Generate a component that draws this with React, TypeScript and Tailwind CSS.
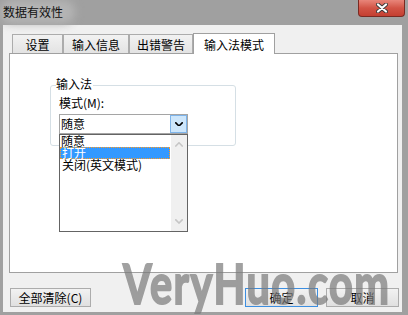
import React from "react";

function Chevron({ up = false, color = "#000", w = 8, sw = 2 }: { up?: boolean; color?: string; w?: number; sw?: number }) {
  return (
    <svg width={w} height={w * 0.6} viewBox="0 0 10 6" className="block">
      <path d={up ? "M1 5 L5 1 L9 5" : "M1 1 L5 5 L9 1"} fill="none" stroke={color} strokeWidth={sw} strokeLinecap="square" />
    </svg>
  );
}

function Tab({ label, active = false, w }: { label: string; active?: boolean; w: string }) {
  if (active) {
    return (
      <div className={`${w} h-[21px] bg-white border border-b-0 border-[#a0a0a0] relative z-10 -mb-px flex items-center justify-center text-[12px] leading-[12px] pt-[1px]`}>
        {label}
      </div>
    );
  }
  return (
    <div className={`${w} h-[19px] bg-gradient-to-b from-[#f2f2f2] to-[#e3e3e3] border border-b-0 border-[#acacac] flex items-center justify-center text-[12px] leading-[12px] pt-[1px]`}>
      {label}
    </div>
  );
}

function Btn({ label, w, focused = false }: { label: string; w: string; focused?: boolean }) {
  return (
    <div
      className={`${w} h-[19px] border ${focused ? "border-[#3c8ee0]" : "border-[#acacac]"} bg-gradient-to-b from-[#f2f2f2] to-[#e0e0e0] flex items-center justify-center text-[12px] leading-[12px]`}
    >
      {label}
    </div>
  );
}

export default function App() {
  return (
    <div className="w-[408px] h-[315px] relative overflow-hidden bg-[#a0a0a0] font-['Noto_Sans_CJK_SC','Noto_Sans',sans-serif] text-black">
      {/* title bar */}
      <div className="h-[25px] relative">
        <div className="absolute left-0 top-0 w-[75px] h-[24px] rounded-full bg-[#b4b4b4] blur-[4px]" />
        <div className="relative pl-[3px] pt-[6px] text-[12px] leading-[12px] text-[#111]">数据有效性</div>
        <div className="absolute left-[358px] top-0 w-[47px] h-[17px] rounded-b-[4px] border border-t-0 border-[#7a2a22] bg-gradient-to-b from-[#e8857a] via-[#d25446] to-[#c43f31] flex items-center justify-center">
          <svg width="12" height="10" viewBox="0 0 12 10">
            <path d="M2 1.5 L10 8.5 M10 1.5 L2 8.5" stroke="#3a3a3a" strokeWidth="4" strokeLinecap="round" />
            <path d="M2 1.5 L10 8.5 M10 1.5 L2 8.5" stroke="#fff" strokeWidth="2.2" strokeLinecap="round" />
          </svg>
        </div>
      </div>

      {/* content */}
      <div className="ml-[3px] w-[399px] h-[287px] bg-[#f0f0f0] flex flex-col px-[6px] pt-[7px]">
        <div className="h-[21px] flex items-end pl-[3px]">
          <Tab label="设置" w="w-[51px]" />
          <Tab label="输入信息" w="w-[66px]" />
          <Tab label="出错警告" w="w-[64px]" />
          <Tab label="输入法模式" w="w-[82px]" active />
        </div>
        <div className="w-[389px] h-[220px] border border-[#a0a0a0] bg-white relative">
          <div className="ml-[40px] mt-[31px] w-[186px] h-[61px] border border-[#d5dfe5] rounded-[3px] relative pl-[8px] pt-[11px]">
            <div className="absolute left-[5px] top-[-8px] bg-white pr-[1px] text-[12px] leading-[12px]">输入法</div>
            <div className="text-[12px] leading-[12px]">模式(M):</div>
            <div className="mt-[5px] w-[129px] h-[20px] border border-[#a5a5a5] bg-white relative flex items-center">
              <span className="pl-[1px] text-[12px] leading-[12px]">随意</span>
              <div className="absolute right-0 top-0 w-[17px] h-[18px] border border-[#7eb4ea] bg-[#cde6fb] flex items-center justify-center">
                <Chevron w={8} sw={2} />
              </div>
              {/* dropdown list */}
              <div className="absolute left-[-1px] top-[19px] w-[129px] h-[98px] border border-[#646464] bg-white z-20 flex">
                <div className="w-[110px] flex flex-col text-[12px] leading-[12px]">
                  <div className="h-[12px] pl-[1px]">随意</div>
                  <div className="h-[12px] pl-[1px] bg-[#3399ff] text-white border border-dotted border-[#ff9a20] leading-[10px]">打开</div>
                  <div className="h-[12px] pl-[2px]">关闭(英文模式)</div>
                </div>
                <div className="ml-auto w-[16px] h-full bg-[#f0f0f0] flex flex-col items-center justify-between pt-[7px] pb-[7px]">
                  <Chevron up color="#c6c6c6" w={8} sw={2} />
                  <Chevron color="#c6c6c6" w={8} sw={2} />
                </div>
              </div>
            </div>
          </div>
        </div>
        <div className="mt-[15px] flex pl-[1px]">
          <Btn label="全部清除(C)" w="w-[81px]" />
          <div className="ml-auto flex gap-[8px] mr-[-3px]">
            <Btn label="确定" w="w-[73px]" focused />
            <Btn label="取消" w="w-[73px]" />
          </div>
        </div>
      </div>

      {/* watermark */}
      <div className="absolute left-[123px] top-[255px] origin-left scale-x-[0.74] whitespace-nowrap text-[56px] leading-[56px] font-bold font-['Lato',sans-serif] tracking-[2px] text-[#7a7a7a] [-webkit-text-stroke:2px_#7a7a7a] opacity-70 pointer-events-none z-30">
        VeryHuo.com
      </div>
    </div>
  );
}
